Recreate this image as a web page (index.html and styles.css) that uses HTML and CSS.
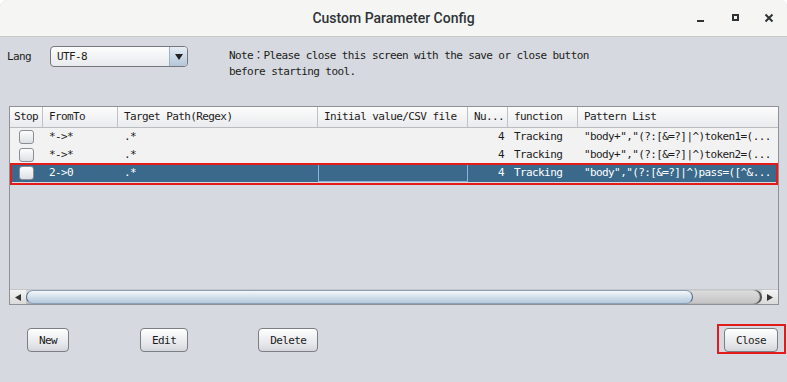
FILE: index.html
```html
<!DOCTYPE html>
<html lang="en">
<head>
  <meta charset="UTF-8" />
  <title>Custom Parameter Config</title>
  <link rel="stylesheet" href="styles.css">
</head>
<body>
  <div class="window">
    <header class="titlebar">
      <span></span>
      <span class="title">Custom Parameter Config</span>
      <div class="controls">
        <svg width="10" height="10" viewBox="0 0 10 10"><rect x="1" y="7" width="7" height="2" fill="#2e3436"/></svg>
        <svg width="10" height="10" viewBox="0 0 10 10"><rect x="3" y="2" width="5" height="5" fill="none" stroke="#2e3436" stroke-width="2"/></svg>
        <svg width="10" height="10" viewBox="0 0 10 10"><path d="M1.5 1.5 L8.5 8.5 M8.5 1.5 L1.5 8.5" stroke="#2e3436" stroke-width="2"/></svg>
      </div>
    </header>

    <main class="content">
      <div class="top">
        <span class="lang">Lang</span>
        <div class="combo">
          <span class="combo-text">UTF-8</span>
          <span class="combo-btn">
            <svg width="8" height="6" viewBox="0 0 8 6"><path d="M0 0 H8 L4 6 Z" fill="#222"/></svg>
          </span>
        </div>
        <p class="note">Note：Please close this screen with the save or close button<br>before starting tool.</p>
      </div>

      <div class="table">
        <div class="row head">
          <div class="cell center">Stop</div>
          <div class="cell">FromTo</div>
          <div class="cell">Target Path(Regex)</div>
          <div class="cell">Initial value/CSV file</div>
          <div class="cell">Nu...</div>
          <div class="cell">function</div>
          <div class="cell last">Pattern List</div>
        </div>
        <div class="row body">
          <div class="cell center"><span class="check"></span></div>
          <div class="cell">*-&gt;*</div>
          <div class="cell">.*</div>
          <div class="cell"></div>
          <div class="cell num">4</div>
          <div class="cell">Tracking</div>
          <div class="cell">"body+","(?:[&amp;=?]|^)token1=(...</div>
        </div>
        <div class="row body">
          <div class="cell center"><span class="check"></span></div>
          <div class="cell">*-&gt;*</div>
          <div class="cell">.*</div>
          <div class="cell"></div>
          <div class="cell num">4</div>
          <div class="cell">Tracking</div>
          <div class="cell">"body+","(?:[&amp;=?]|^)token2=(...</div>
        </div>
        <div class="row body sel">
          <div class="cell center"><span class="check"></span></div>
          <div class="cell">2-&gt;0</div>
          <div class="cell">.*</div>
          <div class="cell focus"></div>
          <div class="cell num">4</div>
          <div class="cell">Tracking</div>
          <div class="cell">"body","(?:[&amp;=?]|^)pass=([^&amp;...</div>
        </div>
        <div class="fill"></div>
        <div class="hscroll">
          <span class="arrow">
            <svg width="6" height="7" viewBox="0 0 6 7"><path d="M6 0 V7 L0 3.5 Z" fill="#333"/></svg>
          </span>
          <div class="track"><div class="thumb"></div></div>
          <span class="arrow">
            <svg width="6" height="7" viewBox="0 0 6 7"><path d="M0 0 V7 L6 3.5 Z" fill="#333"/></svg>
          </span>
        </div>
      </div>

      <div class="buttons">
        <button class="btn">New</button>
        <button class="btn edit">Edit</button>
        <button class="btn delete">Delete</button>
        <div class="mark"><button class="btn">Close</button></div>
      </div>
    </main>
  </div>
</body>
</html>
```

FILE: styles.css
```css
* {
  box-sizing: border-box;
}

html, body {
  margin: 0;
}

body {
  background: #ffffff;
  width: 787px;
  height: 382px;
  overflow: hidden;
  font-family: "DejaVu Sans Mono", "Noto Sans CJK JP", monospace;
  font-size: 11px;
  letter-spacing: -0.6px;
  color: #1c1c1c;
}

.window {
  height: 382px;
  display: flex;
  flex-direction: column;
  background: #d6d9df;
  border-radius: 7px 7px 0 0;
  overflow: hidden;
}

/* title bar */
.titlebar {
  height: 37px;
  flex: none;
  display: grid;
  grid-template-columns: 1fr auto 1fr;
  align-items: center;
  background: #f5f5f4;
  border-bottom: 1px solid #cac8c5;
}

.title {
  font-family: Roboto, "Noto Sans", sans-serif;
  font-size: 14px;
  font-weight: 500;
  letter-spacing: 0;
  color: #2e3436;
  margin-top: -1px;
}

.controls {
  justify-self: end;
  display: flex;
  gap: 24px;
  padding-right: 13px;
  margin-top: -1px;
}

.controls svg {
  display: block;
}

/* content */
.content {
  flex: 1;
  display: flex;
  flex-direction: column;
  padding: 9px 8px 0 9px;
}

.top {
  display: flex;
  align-items: flex-start;
  height: 60px;
}

.lang {
  width: 43px;
  margin-left: -2px;
  line-height: 21px;
}

.combo {
  width: 138px;
  height: 21px;
  display: flex;
  border: 1px solid #74777d;
  border-radius: 4px;
  background: linear-gradient(#fdfdfd, #e8eaed);
  overflow: hidden;
}

.combo-text {
  flex: 1;
  padding-left: 6px;
  line-height: 19px;
}

.combo-btn {
  width: 18px;
  display: flex;
  align-items: center;
  justify-content: center;
  border-left: 1px solid #9fb0c2;
  background: linear-gradient(#e6edf4, #b3c6d8);
}

.note {
  margin: 2px 0 0 41px;
  line-height: 16px;
}

/* table */
.table {
  height: 199px;
  display: flex;
  flex-direction: column;
  border: 1px solid #8f9196;
}

.row {
  display: grid;
  grid-template-columns: 33px 75px 200px 150px 40px 70px 200px;
  flex: none;
}

.cell {
  padding-left: 6px;
  white-space: nowrap;
  overflow: hidden;
}

.cell.center {
  padding-left: 0;
  display: flex;
  justify-content: center;
  align-items: center;
}

.head {
  height: 21px;
  background: linear-gradient(#fcfcfc, #eaebed);
  border-bottom: 1px solid #b8bbc0;
}

.head .cell {
  line-height: 20px;
  border-right: 1px solid #c0c2c6;
}

.head .cell.last {
  border-right: none;
}

.body {
  height: 18px;
  line-height: 18px;
  background: #f2f2f2;
}

.cell.num {
  text-align: right;
  padding: 0 4px 0 0;
}

.check {
  width: 15px;
  height: 14px;
  border: 1px solid #8a8e94;
  border-radius: 3px;
  background: linear-gradient(#fdfdfd, #dde0e4);
  margin-left: -1px;
}

.sel {
  position: relative;
  background: #3a698b;
  color: #ffffff;
}

.sel::after {
  content: "";
  position: absolute;
  left: 0;
  right: 0;
  top: -1px;
  bottom: -3px;
  border: 2px solid #e31b1b;
}

.cell.focus {
  border: 1px solid #8cb3d9;
}

.fill {
  flex: 1;
}

/* horizontal scrollbar */
.hscroll {
  height: 15px;
  flex: none;
  display: flex;
  border-top: 1px solid #c4c6ca;
}

.arrow {
  width: 16px;
  display: flex;
  align-items: center;
  justify-content: center;
  background: linear-gradient(#f4f4f4, #dadada);
}

.track {
  flex: 1;
  background: linear-gradient(#dedede, #c3c3c3);
  border-radius: 0 8px 8px 0;
  box-shadow: inset -2px 0 1px #4a4a4a;
}

.thumb {
  width: 667px;
  height: 100%;
  border: 1px solid #8aa1b8;
  border-left-color: #4d6984;
  border-right-color: #4d6984;
  border-radius: 8px;
  background: linear-gradient(#f4f8fb, #cfdde9 55%, #b6cadc);
}

/* buttons */
.buttons {
  display: flex;
  align-items: flex-start;
  margin-top: 23px;
  padding-left: 18px;
}

.btn {
  height: 24px;
  padding: 0 11px;
  border: 1px solid #7b7e83;
  border-radius: 4px;
  background: linear-gradient(#fefefe, #e6e8eb 65%, #d3d6db);
  font: inherit;
  letter-spacing: inherit;
  color: #1c1c1c;
}

.edit {
  margin-left: 71px;
}

.delete {
  margin-left: 70px;
}

.mark {
  margin: -4px -7px 0 auto;
  padding: 2px 6px 0 5px;
  border: 2px solid #e31b1b;
}

.mark .btn {
  display: block;
}
```
